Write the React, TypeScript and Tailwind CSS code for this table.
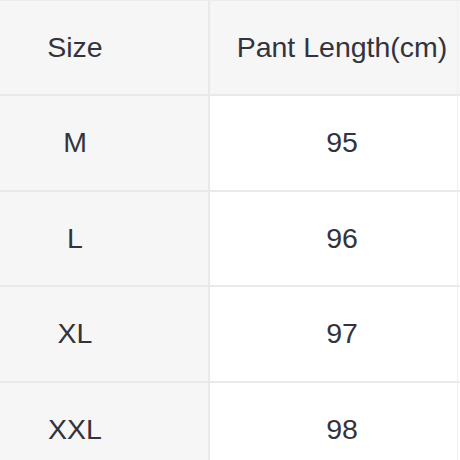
const ROWS = [
  { size: 'M', length: '95' },
  { size: 'L', length: '96' },
  { size: 'XL', length: '97' },
  { size: 'XXL', length: '98' },
];

function Row({ left, right, header }: { left: string; right: string; header?: boolean }) {
  return (
    <div className="flex h-[95.5px] border-b-2 border-[#e9e9e9]">
      <div className="flex w-[266px] shrink-0 items-center justify-center bg-[#f6f6f6]">
        {left}
      </div>
      <div className="w-[2px] shrink-0 bg-[#e9e9e9]" />
      <div className={`flex w-[264px] shrink-0 items-center justify-center ${header ? 'bg-[#f6f6f6]' : 'bg-white'}`}>
        {right}
      </div>
    </div>
  );
}

export default function App() {
  return (
    <div className="relative h-[460px] w-[460px] overflow-hidden bg-white">
      <div
        className="-ml-[58px] -mt-[1.5px] w-[532px] border-t-2 border-[#ececec] text-[28.5px] text-[#33333d]"
        style={{ fontFamily: '"Liberation Sans", Arial, sans-serif' }}
      >
        <Row left="Size" right="Pant Length(cm)" header />
        {ROWS.map(row => (
          <Row key={row.size} left={row.size} right={row.length} />
        ))}
      </div>
      <div className="absolute right-[2px] top-0 h-full w-px bg-[#f0f0f0]" />
    </div>
  );
}
